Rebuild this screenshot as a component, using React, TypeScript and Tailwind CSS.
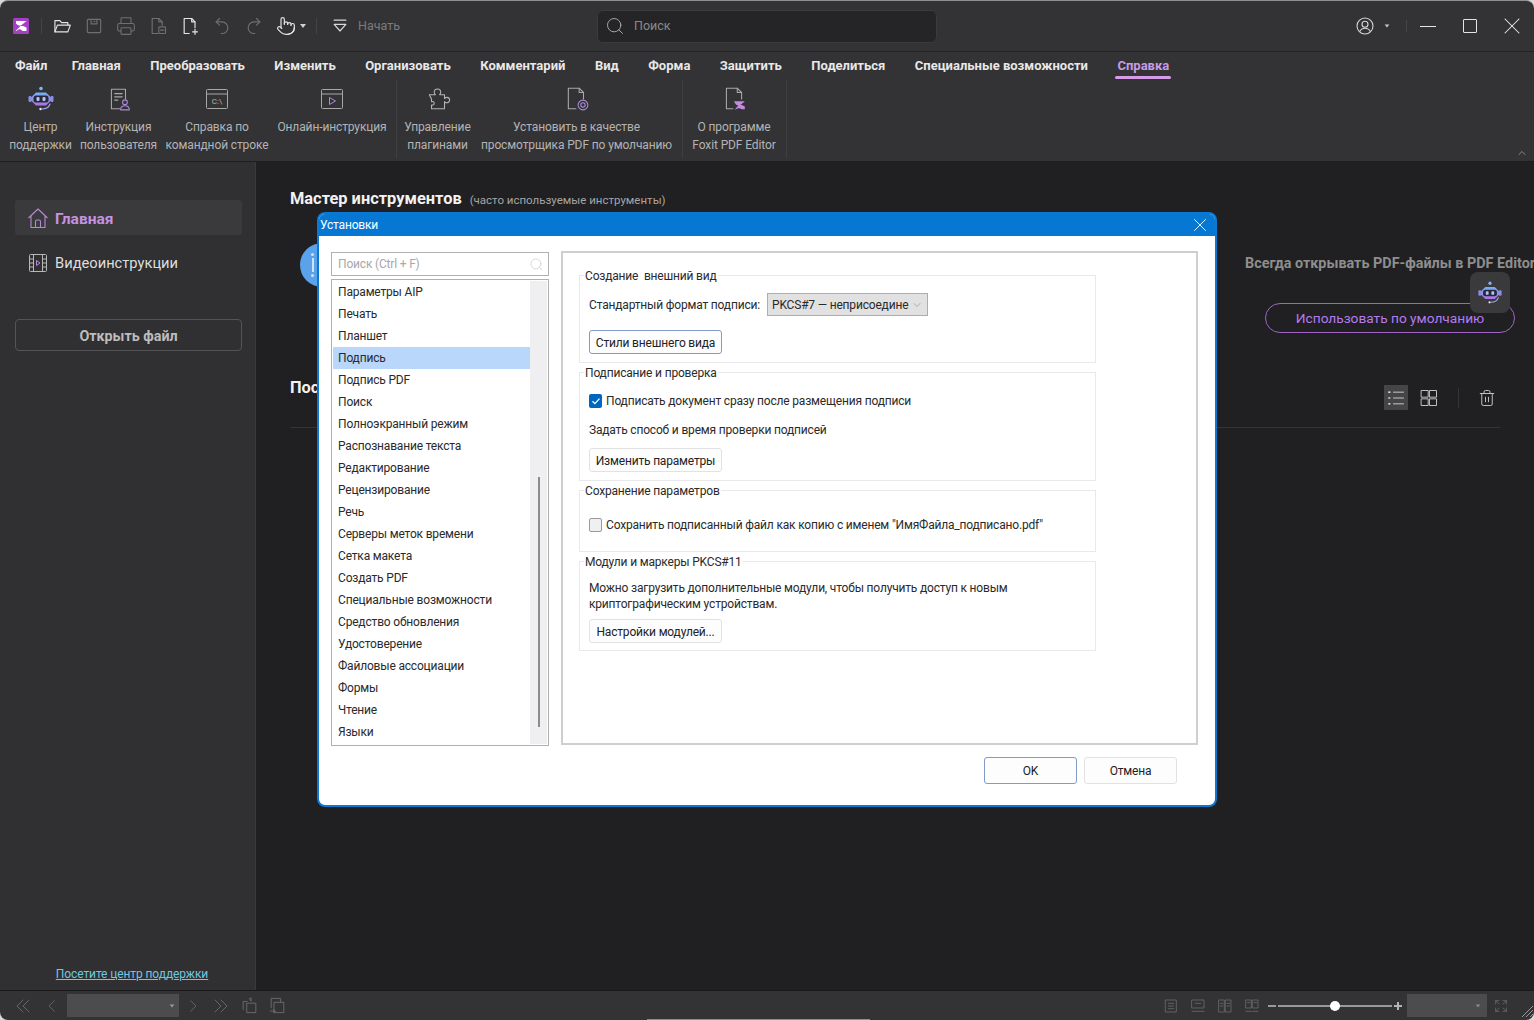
import { ChevronDown, ChevronUp, Pointer, Printer, Search, Trash2, X } from 'lucide-react';
import type { ReactNode } from 'react';

const tabs = ['Файл', 'Главная', 'Преобразовать', 'Изменить', 'Организовать', 'Комментарий', 'Вид', 'Форма', 'Защитить', 'Поделиться', 'Специальные возможности'];

const prefs = ['Параметры AIP', 'Печать', 'Планшет', 'Подпись', 'Подпись PDF', 'Поиск', 'Полноэкранный режим', 'Распознавание текста', 'Редактирование', 'Рецензирование', 'Речь', 'Серверы меток времени', 'Сетка макета', 'Создать PDF', 'Специальные возможности', 'Средство обновления', 'Удостоверение', 'Файловые ассоциации', 'Формы', 'Чтение', 'Языки'];

// plain stroked svg on a 24 box, most of the app icons go through this
function Ico({ size = 20, color = '#6f6f6f', width = 1.4, children }: { size?: number; color?: string; width?: number; children: ReactNode }) {
    return (
        <svg width={size} height={size} viewBox="0 0 24 24" fill="none" stroke={color} strokeWidth={width} strokeLinecap="round" strokeLinejoin="round">
            {children}
        </svg>
    );
}

function Robot({ size = 28, id }: { size?: number; id: string }) {
    return (
        <svg width={size} height={size} viewBox="0 0 28 28" fill="none">
            <defs>
                <linearGradient id={id} x1="0" y1="0" x2="0" y2="1">
                    <stop offset="0" stopColor="#6fb2f5" />
                    <stop offset="1" stopColor="#b06fe0" />
                </linearGradient>
            </defs>
            <circle cx="14" cy="3.5" r="1.8" fill="#7fb4f0" />
            <path d="M9 7.5h10l5 5v3l-5 5H9l-5-5v-3z" fill={`url(#${id})`} />
            <rect x="1.5" y="11" width="3" height="6" rx="1.2" fill="#8b8ce8" />
            <rect x="23.5" y="11" width="3" height="6" rx="1.2" fill="#8b8ce8" />
            <rect x="6.5" y="10.5" width="15" height="7" rx="2.5" fill="#2a2838" />
            <rect x="9.5" y="12" width="3" height="4" rx="1" fill="#a9c7f5" />
            <rect x="15.5" y="12" width="3" height="4" rx="1" fill="#a9c7f5" />
            <path d="M23 19c-1 3-4 5-8 5" stroke="#9aa7e8" strokeWidth="1.2" strokeLinecap="round" />
            <circle cx="13.5" cy="24" r="1.2" fill="#e6e6f5" />
        </svg>
    );
}

function RibbonItem({ w, line1, line2, icon }: { w: string; line1: string; line2?: string; icon: ReactNode }) {
    return (
        <div className={`flex flex-col items-center shrink-0 ${w}`}>
            <div className="h-[28px] mt-[7px] flex items-center justify-center">{icon}</div>
            <div className="mt-[5px] text-[12px] tracking-[-0.12px] leading-[18px] text-[#b4b4b4] text-center whitespace-nowrap">
                <div>{line1}</div>
                {line2 && <div>{line2}</div>}
            </div>
        </div>
    );
}

function DialogButton({ children, focus, className = 'w-[133px] h-[24px]' }: { children: ReactNode; focus?: boolean; className?: string }) {
    return (
        <div className={`${className} flex items-center justify-center pt-px rounded-[3px] border bg-[#fdfdfe] text-[#222] whitespace-nowrap ${focus ? 'border-[#7f9bc8]' : 'border-[#e2e2e4]'}`}>
            {children}
        </div>
    );
}

function Group({ title, h, children }: { title: string; h: string; children: ReactNode }) {
    return (
        <fieldset className={`w-[517px] mt-px border border-[#e9e9ec] pl-[9px] ${h}`}>
            <legend className="-ml-[5px] px-px h-[16px] pt-px leading-[16px] text-[#2a2a2a] whitespace-pre">{title}</legend>
            {children}
        </fieldset>
    );
}

function Dialog() {
    return (
        <div className="absolute left-[317px] top-[212px] w-[900px] h-[595px] rounded-lg border-2 border-[#0a78d4] bg-white text-[12px] tracking-[-0.18px] text-[#2a2a2a] overflow-hidden">
            <div className="h-[22px] pb-px bg-[#0678d4] flex items-center justify-between pl-[1px] pr-[4px] text-white">
                <span>Установки</span>
                <X size={22} strokeWidth={1} color="#fff" />
            </div>
            <div className="flex gap-[12px] pl-[12px] pt-[16px]">
                <div className="w-[218px] h-[494px] shrink-0 flex flex-col">
                    <div className="h-[24px] border border-[#b0b0b0] flex items-center justify-between pl-[6px] pr-[4px] text-[#a8a8a8]">
                        <span>Поиск (Ctrl + F)</span>
                        <Search size={15} strokeWidth={1} color="#c4c4c4" />
                    </div>
                    <div className="mt-[3px] h-[467px] border border-[#b0b0b0] p-px flex">
                        <div className="w-[197px]">
                            {prefs.map((p) => (
                                <div key={p} className={`h-[22px] pl-[5px] flex items-center whitespace-nowrap ${p === 'Подпись' ? 'bg-[#b9d6fb]' : ''}`}>
                                    {p}
                                </div>
                            ))}
                        </div>
                        <div className="w-[17px] bg-[#efeef0] pl-[8px] pt-[196px]">
                            <div className="w-[2px] h-[250px] bg-[#8b8b8b]" />
                        </div>
                    </div>
                </div>
                <div className="w-[637px] h-[494px] -mt-px shrink-0 border-2 border-[#cfcfcf] pl-[16px] pt-[13px]">
                    <Group title="Создание  внешний вид" h="h-[96px]">
                        <div className="mt-[10px] flex items-center h-[23px] whitespace-nowrap">
                            <span className="w-[178px]">Стандартный формат подписи:</span>
                            <div className="w-[161px] h-[23px] bg-[#e1e1e1] border border-[#adadad] flex items-center justify-between pl-[4px] pr-[4px] whitespace-nowrap overflow-hidden">
                                <span>PKCS#7 — неприсоедине</span>
                                <ChevronDown size={12} strokeWidth={1} color="#777" className="shrink-0" />
                            </div>
                        </div>
                        <DialogButton focus className="w-[133px] h-[24px] mt-[14px]">Стили внешнего вида</DialogButton>
                    </Group>
                    <Group title="Подписание и проверка" h="h-[117px]">
                        <div className="mt-[12px] h-[18px] flex items-center">
                            <div className="w-[13px] h-[14px] rounded-[2px] bg-[#0067c0] flex items-center justify-center shrink-0">
                                <svg width="10" height="10" viewBox="0 0 10 10" fill="none" stroke="#fff" strokeWidth="1.3"><path d="M1.5 5.2l2.4 2.4 4.6-5" /></svg>
                            </div>
                            <span className="ml-[4px]">Подписать документ сразу после размещения подписи</span>
                        </div>
                        <div className="mt-[11px] h-[18px] flex items-center">Задать способ и время проверки подписей</div>
                        <DialogButton className="w-[133px] h-[24px] mt-[9px]">Изменить параметры</DialogButton>
                    </Group>
                    <Group title="Сохранение параметров" h="h-[70px]">
                        <div className="mt-[18px] h-[18px] flex items-center">
                            <div className="w-[13px] h-[14px] rounded-[2px] bg-[#f0f0f0] border border-[#9a9a9a] shrink-0" />
                            <span className="ml-[4px]">Сохранить подписанный файл как копию с именем "ИмяФайла_подписано.pdf"</span>
                        </div>
                    </Group>
                    <Group title="Модули и маркеры PKCS#11" h="h-[98px]">
                        <div className="mt-[11px] leading-[16px]">
                            <div>Можно загрузить дополнительные модули, чтобы получить доступ к новым</div>
                            <div>криптографическим устройствам.</div>
                        </div>
                        <DialogButton className="w-[133px] h-[24px] mt-[7px]">Настройки модулей...</DialogButton>
                    </Group>
                </div>
            </div>
            <div className="mt-[11px] flex justify-end gap-[7px] pr-[38px]">
                <DialogButton focus className="w-[93px] h-[27px]">OK</DialogButton>
                <DialogButton className="w-[93px] h-[27px]">Отмена</DialogButton>
            </div>
        </div>
    );
}

export default function App() {
    return (
        <div className="relative w-[1534px] h-[1020px] overflow-hidden bg-[#d9d9d9] font-['Roboto','Noto_Sans',sans-serif]">
            <div className="w-full h-full flex flex-col rounded-lg overflow-hidden bg-[#333234] border-t border-[#8f8f8f]">
                {/* Title bar */}
                <div className="h-[51px] shrink-0 border-b border-[#232224] flex items-center pl-[5px]">
                    <div className="w-[32px] flex justify-center">
                        <svg width="16" height="16" viewBox="0 0 16 16">
                            <rect width="16" height="16" rx="1.5" fill="#a63fc4" />
                            <path d="M3 3h10.5L7 8.2c2-.6 4.5-.3 6.5 1.3V13H9.5C8 11 6 10.2 3.5 13H2.5L8 7.5C6 7.8 4 7 3 5.5z" fill="#fff" />
                        </svg>
                    </div>
                    <div className="w-px h-[16px] ml-[4px] bg-[#444345]" />
                    <div className="flex ml-[4px]">
                        {[
                            <Ico key="open" color="#e4e4e4"><path d="M3.5 19V5.5h6l2 2.5h7.5v3" /><path d="M3.5 19l3-8H22l-3 8z" /></Ico>,
                            <Ico key="save"><rect x="4" y="4" width="16" height="16" rx="1" /><path d="M8.5 4v5.5h7V4" /><path d="M12 6.5h1" /></Ico>,
                            <Printer key="print" size={20} strokeWidth={1.3} color="#6f6f6f" />,
                            <Ico key="minus"><path d="M12 21H5V3h8l4 4v4" /><path d="M13 3v4h4" /><rect x="13" y="13" width="8" height="8" rx="1" /><path d="M15 17h4" /></Ico>,
                            <Ico key="new" color="#e4e4e4"><path d="M11 21H5V3h9l4 4v7" /><path d="M14 3v4h4" /><path d="M18 16v6M15 19h6" /></Ico>,
                            <Ico key="undo"><path d="M9 3L5 7l4 4" /><path d="M5 7h7a7 7 0 0 1 0 14h-1" /></Ico>,
                            <Ico key="redo"><path d="M15 3l4 4-4 4" /><path d="M19 7h-7a7 7 0 0 0 0 14h1" /></Ico>,
                        ].map((icon, i) => (
                            <div key={i} className="w-[32px] flex justify-center">{icon}</div>
                        ))}
                    </div>
                    <div className="w-[32px] flex justify-center"><Pointer size={20} strokeWidth={1.4} color="#e4e4e4" /></div>
                    <svg className="-ml-[4px]" width="10" height="6" viewBox="0 0 10 6"><path d="M2 1h6L5 5z" fill="#d0d0d0" /></svg>
                    <div className="w-px h-[16px] ml-[8px] bg-[#444345]" />
                    <div className="w-[32px] ml-[7px] flex justify-center">
                        <Ico color="#d8d8d8"><path d="M5 5h14" /><path d="M5 10l7 8 7-8z" /></Ico>
                    </div>
                    <span className="w-[239px] ml-[2px] pt-px text-[12.5px] text-[#7c7c7c]">Начать</span>
                    <div className="w-[340px] h-[33px] shrink-0 rounded-md bg-[#252426] border border-[#3b3a3c] flex items-center pl-[7px] text-[12.5px] text-[#8a8a8a]">
                        <Search size={20} strokeWidth={1.1} color="#b0b0b0" />
                        <span className="ml-[9px] pt-px">Поиск</span>
                    </div>
                    <div className="ml-auto flex items-center pr-[8px]">
                        <svg width="18" height="18" viewBox="0 0 18 18" fill="none" stroke="#d8d8d8" strokeWidth="1.1">
                            <circle cx="9" cy="9" r="8" /><circle cx="9" cy="7.3" r="3" /><path d="M3.8 14.5c1-2.4 2.8-3.2 5.2-3.2s4.200.8 5.200 3.200" />
                        </svg>
                        <svg className="ml-[9px]" width="8" height="6" viewBox="0 0 10 6"><path d="M2 1h6L5 5z" fill="#c8c8c8" /></svg>
                        <div className="w-px h-[12px] ml-[15px] bg-[#444345]" />
                        <div className="w-[16px] h-px ml-[13px] bg-[#e4e4e4]" />
                        <div className="w-[14px] h-[14px] ml-[27px] rounded-[1px] border border-[#e4e4e4]" />
                        <X className="ml-[21px]" size={28} strokeWidth={0.9} color="#e8e8e8" />
                    </div>
                </div>

                {/* Ribbon tabs */}
                <div className="h-[26px] pt-[2px] shrink-0 flex items-center pl-[15px] gap-[29.5px] text-[13px] font-bold text-[#e8e8e8] whitespace-nowrap">
                    {tabs.map((t) => (
                        <span key={t} className={t === 'Файл' ? '-mr-[5px]' : ''}>{t}</span>
                    ))}
                    <span className="relative text-[#c79be6]">
                        Справка
                        <span className="absolute -left-[2px] -right-[2px] -bottom-[3px] h-[3px] rounded-sm bg-[#d79ae8]" />
                    </span>
                </div>

                {/* Ribbon commands */}
                <div className="relative h-[84px] shrink-0 border-b border-[#1d1c1e] flex pl-[5px]">
                    <RibbonItem w="w-[71px]" line1="Центр" line2="поддержки" icon={<Robot id="rb1" />} />
                    <RibbonItem w="w-[75px] ml-[5px]" line1="Инструкция" line2="пользователя" icon={
                        <Ico size={26} color="#a8a8a8" width={1}>
                            <path d="M13 21H5V3h13v9" /><path d="M8 7h7M8 10h7M8 13h3" />
                            <g stroke="#a98bd8"><circle cx="17.500" cy="15" r="2.200" /><path d="M13.500 22c0-2.500 1.500-3.800 4-3.800s4 1.300 4 3.800z" /></g>
                        </Ico>
                    } />
                    <RibbonItem w="w-[104px] ml-[9px]" line1="Справка по" line2="командной строке" icon={
                        <svg width="26" height="26" viewBox="0 0 26 26" fill="none" stroke="#a8a8a8" strokeWidth="1">
                            <rect x="2.500" y="3.500" width="21" height="19" rx="1" /><path d="M2.500 8h21" />
                            <text x="13" y="18" textAnchor="middle" fontSize="8" fill="#b4b4b4" stroke="none">C:\</text>
                        </svg>
                    } />
                    <RibbonItem w="w-[110px] ml-[8px]" line1="Онлайн-инструкция" icon={
                        <svg width="26" height="26" viewBox="0 0 26 26" fill="none" stroke="#a8a8a8" strokeWidth="1">
                            <rect x="2.500" y="3.500" width="21" height="19" rx="1" /><path d="M2.500 8h21" />
                            <path d="M10.500 11.500l6 3.500-6 3.500z" stroke="#a98bd8" />
                        </svg>
                    } />
                    <div className="w-px h-[78px] ml-[9px] mt-[2px] bg-[#3f3e40]" />
                    <RibbonItem w="w-[67px] ml-[7px]" line1="Управление" line2="плагинами" icon={
                        <Ico size={26} color="#b4b4b4" width={1}>
                            <path d="M4 8h5.500c-.8-1-1-1.500-1-2.200a3 3 0 0 1 6 0c0 .7-.2 1.200-1 2.200H18v3.500c1-.8 1.500-1 2.200-1a2.500 2.500 0 0 1 0 5c-.7 0-1.200-.2-2.200-1V21H6v-3.500c1.200.5 2.500-.2 2.500-1.500S7.200 14 6 14.500V12z" />
                        </Ico>
                    } />
                    <RibbonItem w="w-[195px] ml-[8px]" line1="Установить в качестве" line2="просмотрщика PDF по умолчанию" icon={
                        <Ico size={26} color="#a8a8a8" width={1}>
                            <path d="M11 21H4V2h10l4 4v6" /><path d="M14 2v4h4" />
                            <g stroke="#a98bd8"><circle cx="17.500" cy="17.500" r="4.500" /><circle cx="17.500" cy="17.500" r="2" /></g>
                        </Ico>
                    } />
                    <div className="w-px h-[78px] ml-[8px] mt-[2px] bg-[#3f3e40]" />
                    <RibbonItem w="w-[88px] ml-[7px]" line1="О программе" line2="Foxit PDF Editor" icon={
                        <Ico size={26} color="#a8a8a8" width={1}>
                            <path d="M11 21H5V2h10l4 4v6" /><path d="M15 2v4h4" />
                            <path d="M12 14h10l-4 3.500c1.500 0 3 .5 4 1.500v2.500h-3c-1.500-1.500-3-1.500-6.500.5l3.500-4c-1.500 0-3-1.500-4-4z" fill="#c48ae0" stroke="none" />
                        </Ico>
                    } />
                    <div className="w-px h-[78px] ml-[8px] mt-[2px] bg-[#3f3e40]" />
                    <ChevronUp className="absolute right-[6px] bottom-[2px]" size={12} strokeWidth={2} color="#8a8a8a" />
                </div>

                {/* Main area */}
                <div className="flex flex-1 min-h-0">
                    <aside className="w-[256px] shrink-0 bg-[#302f31] border-r border-[#3a393b] flex flex-col pl-[15px] pr-[13px] pt-[38px] pb-[7px]">
                        <div className="h-[35px] rounded-[3px] bg-[#3a393b] flex items-center pl-[12px] text-[15.500px] font-bold text-[#c592e0]">
                            <svg width="22" height="22" viewBox="0 0 22 22" fill="none" stroke="#b48ad8" strokeWidth="1.1" strokeLinejoin="round">
                                <path d="M1.500 11L11 2l9.500 9M4 9v11.500h14V9" /><path d="M8.500 20.500V14.500a1.500 1.500 0 0 1 1.500-1.500h2a1.500 1.500 0 0 1 1.500 1.500v6" />
                            </svg>
                            <span className="ml-[6px] pt-[4px]">Главная</span>
                        </div>
                        <div className="h-[35px] mt-[10px] flex items-center pl-[13px] text-[14.700px] text-[#dedede]">
                            <svg width="20" height="20" viewBox="0 0 20 20" fill="none" stroke="#b8b8b8" strokeWidth="1">
                                <rect x="1.500" y="1.500" width="17" height="17" rx="1" /><path d="M5.500 1.500v17M14.500 1.500v17M1.500 6h4M1.500 10h4M1.500 14h4M14.500 6h4M14.500 10h4M14.500 14h4" />
                                <path d="M8.500 7.500l3.500 2.500-3.500 2.500z" stroke="#b48ad8" />
                            </svg>
                            <span className="ml-[7px] pt-[2px]">Видеоинструкции</span>
                        </div>
                        <div className="h-[32px] mt-[39px] pt-[4px] rounded-[4px] border border-[#545355] flex items-center justify-center text-[14.300px] font-bold text-[#bcbcbc]">Открыть файл</div>
                        <div className="mt-auto pl-[7px] text-center text-[12px] tracking-[-0.1px] text-[#6fc8e0] underline">Посетите центр поддержки</div>
                    </aside>
                    <main className="flex-1 min-w-0 bg-[#201f21] pl-[34px] pr-[34px] pt-[26px] overflow-hidden">
                        <div className="h-[22px] pt-px flex items-center whitespace-nowrap">
                            <span className="text-[16.400px] font-bold text-[#f2f2f2]">Мастер инструментов</span>
                            <span className="ml-[8px] pt-[2px] text-[11.500px] text-[#a6a6a6]">(часто используемые инструменты)</span>
                        </div>
                        <div className="mt-[33px] h-[90px] flex">
                            <div className="w-[44px] h-[44px] ml-[10px] shrink-0 rounded-full bg-[#5aa2ea] flex flex-col items-start gap-[2px] pl-[11px] pt-[10px]">
                                <div className="w-[3px] h-[3px] rounded-full bg-[#cfe2f8]" />
                                <div className="w-[2px] h-[14px] ml-[0.5px] bg-[#cfe2f8]" />
                                <div className="w-[3px] h-[3px] rounded-full bg-[#cfe2f8]" />
                            </div>
                            <div className="ml-[901px] pt-[11px] shrink-0">
                                <div className="h-[20px] leading-[20px] text-[14.400px] font-bold text-[#8e8e8e] whitespace-nowrap">Всегда открывать PDF-файлы в PDF Editor</div>
                                <div className="w-[250px] h-[30px] mt-[29px] ml-[20px] pt-px rounded-full border border-[#a064c4] flex items-center justify-center text-[13.700px] text-[#b57cf0]">Использовать по умолчанию</div>
                            </div>
                        </div>
                        <div className="mt-[52px] h-[25px] flex">
                            <span className="-mt-[9px] text-[16.400px] font-bold text-[#f2f2f2]">Пос</span>
                            <div className="ml-auto flex items-center pr-px">
                                <div className="w-[24px] h-[25px] bg-[#454446] flex items-center justify-center">
                                    <Ico size={20} color="#d4d4d4" width={1.100}><path d="M9 5h12M9 12h12M9 19h12" /><path d="M3.500 5h1M3.500 12h1M3.500 19h1" strokeWidth="2" /></Ico>
                                </div>
                                <div className="w-[24px] ml-[9px] flex justify-center">
                                    <Ico size={20} color="#cfcfcf" width={1.100}><rect x="3" y="3" width="8" height="8" /><rect x="13" y="3" width="8" height="8" /><rect x="3" y="13" width="8" height="8" /><rect x="13" y="13" width="8" height="8" /></Ico>
                                </div>
                                <div className="w-px h-[20px] ml-[17px] bg-[#343335]" />
                                <div className="w-[24px] ml-[16px] flex justify-center"><Trash2 size={18} strokeWidth={1.2} color="#cfcfcf" /></div>
                            </div>
                        </div>
                        <div className="mt-[17px] h-px bg-[#343335]" />
                    </main>
                </div>

                {/* Status bar */}
                <div className="h-[30px] shrink-0 border-t border-[#1a191b] flex items-center pl-[14px] text-[#6f6f6f]">
                    <Ico size={18} color="#6c6c6c" width={1.200}><path d="M12 4l-8 8 8 8M20 4l-8 8 8 8" /></Ico>
                    <div className="ml-[13px] flex"><Ico size={14} color="#6c6c6c" width={1.500}><path d="M16 3l-9 9 9 9" /></Ico></div>
                    <div className="w-[112px] h-[23px] ml-[8px] bg-[#4c4b4d] flex items-center justify-end pr-[3px]">
                        <svg width="8" height="6" viewBox="0 0 10 6"><path d="M2 1h6L5 5z" fill="#9a9a9a" /></svg>
                    </div>
                    <div className="w-[28px] flex justify-center"><Ico size={14} color="#6c6c6c" width={1.500}><path d="M8 3l9 9-9 9" /></Ico></div>
                    <div className="w-[28px] flex justify-center"><Ico size={18} color="#6c6c6c" width={1.200}><path d="M4 4l8 8-8 8M12 4l8 8-8 8" /></Ico></div>
                    <div className="w-[28px] flex justify-center"><Ico size={19} color="#6c6c6c" width={1.200}><path d="M4 17V7h5M9 9h11v12H9zM14 6l-2.500-3M14 6V2" /></Ico></div>
                    <div className="w-[28px] flex justify-center"><Ico size={19} color="#6c6c6c" width={1.200}><path d="M4 15V3h12v5M8 8h12v13H8zM3 19h6M7 17l2 2-2 2" /></Ico></div>
                    <div className="ml-auto flex items-center pr-[1px]">
                        <div className="flex">
                            <div className="w-[27px] flex justify-center"><Ico size={16} color="#6c6c6c" width={1.200}><rect x="4" y="3" width="16" height="18" /><path d="M8 8h8M8 12h8M8 16h8" /></Ico></div>
                            <div className="w-[27px] flex justify-center"><Ico size={16} color="#6c6c6c" width={1.200}><path d="M3 3h18v12H3zM8 8h8M3 20h18" /></Ico></div>
                            <div className="w-[27px] flex justify-center"><Ico size={16} color="#6c6c6c" width={1.200}><rect x="3" y="3" width="8" height="18" /><rect x="13" y="3" width="8" height="18" /><path d="M5 8h4M5 12h4M15 8h4M15 12h4" /></Ico></div>
                            <div className="w-[27px] flex justify-center"><Ico size={16} color="#6c6c6c" width={1.200}><path d="M3 3h8v12H3zM13 3h8v12h-8zM5 7h4M15 7h4M3 20h8M13 20h8" /></Ico></div>
                        </div>
                        <div className="w-[8px] h-[2px] ml-[3px] bg-[#9a9a9a]" />
                        <div className="relative w-[114px] h-[2px] ml-[2px] bg-[#9a9a9a]">
                            <div className="absolute left-[52px] -top-[4px] w-[10px] h-[10px] rounded-full bg-white" />
                        </div>
                        <div className="relative w-[8px] h-[8px] ml-[2px]">
                            <div className="absolute left-0 top-[3px] w-[8px] h-[2px] bg-[#b4b4b4]" />
                            <div className="absolute left-[3px] top-0 w-[2px] h-[8px] bg-[#b4b4b4]" />
                        </div>
                        <div className="w-[80px] h-[23px] ml-[5px] bg-[#4c4b4d] flex items-center justify-end pr-[5px]">
                            <svg width="8" height="6" viewBox="0 0 10 6"><path d="M2 1h6L5 5z" fill="#8a8a8a" /></svg>
                        </div>
                        <div className="w-[28px] flex justify-center"><Ico size={16} color="#6c6c6c" width={1.200}><path d="M4 9V4h5M4 4l5 5M20 9V4h-5M20 4l-5 5M4 15v5h5M4 20l5-5M20 15v5h-5M20 20l-5-5" /></Ico></div>
                        <svg className="self-end ml-[6px]" width="12" height="12" viewBox="0 0 12 12" stroke="#9a9a9a" strokeWidth="1"><path d="M1 12L12 1M5 12l7-7M9 12l3-3" /></svg>
                    </div>
                </div>
            </div>

            <Dialog />

            {/* floating assistant */}
            <div className="absolute left-[1470px] top-[272px] w-[40px] h-[41px] rounded-lg bg-[#3a393b] flex items-center justify-center">
                <Robot id="rb2" size={26} />
            </div>

            {/* stray light edge along the bottom of the capture */}
            <div className="absolute left-[647px] bottom-0 w-[223px] h-px bg-[#8f8f8f]" />
        </div>
    );
}
